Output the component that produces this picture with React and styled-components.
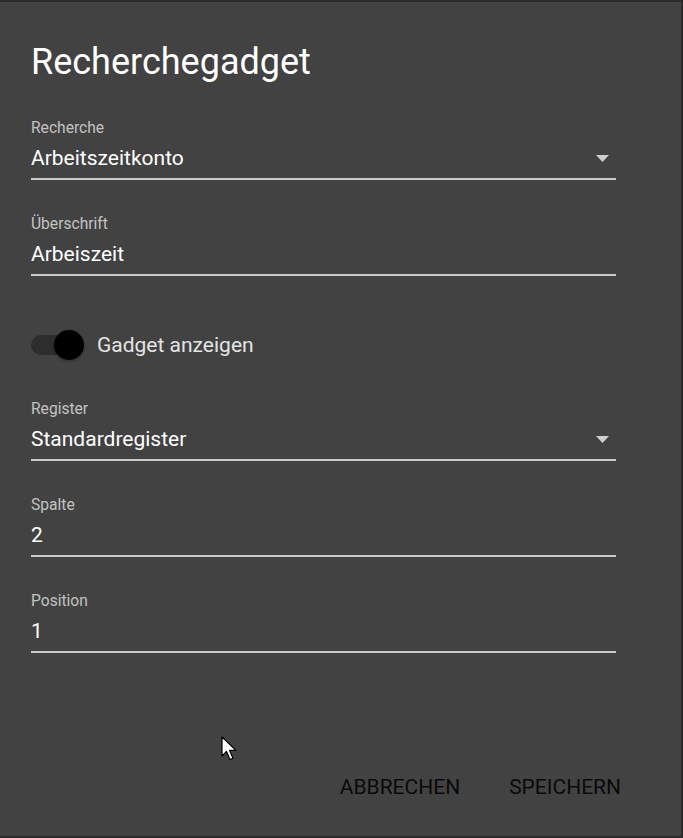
import React from 'react';
import styled, { createGlobalStyle } from 'styled-components';

const GlobalStyle = createGlobalStyle`
  html, body {
    margin: 0;
    padding: 0;
    background: #2b2b2b;
  }
  body {
    font-family: Roboto, "Liberation Sans", Arial, sans-serif;
  }
`

const Backdrop = styled.div`
  position: relative;
  height: 838px;
  padding: 2px 2px 2px 0;
  box-sizing: border-box;
`

const Dialog = styled.div`
  height: 834px;
  background: #424242;
  display: flex;
  flex-direction: column;
  box-sizing: border-box;
  padding: 38px 0 25px;
`

const Title = styled.h2`
  margin: 0 0 0 31px;
  font-size: 36px;
  line-height: 44px;
  font-weight: 400;
  color: #fff;
`

const Form = styled.div`
  display: flex;
  flex-direction: column;
  gap: 35px;
  margin-top: 35px;
  padding: 0 65px 0 31px;
`

const Field = styled.div`
  display: flex;
  flex-direction: column;
`

const Label = styled.span`
  font-size: 15.6px;
  line-height: 18px;
  color: #c2c2c2;
`

const Value = styled.div`
  margin-top: 9px;
  display: flex;
  align-items: center;
  justify-content: space-between;
  font-size: 21px;
  line-height: 24px;
  color: #fff;
  padding: 0 7px 8px 0;
  border-bottom: 2px solid #cacaca;
`

const Arrow = styled.svg`
  width: 13px;
  height: 7px;
  display: block;
`

const ToggleRow = styled.label`
  display: flex;
  align-items: center;
  gap: 14px;
  height: 40px;
  padding-top: 14px;
`

const Track = styled.span`
  position: relative;
  display: block;
  width: 52px;
  height: 40px;
  &::before {
    content: '';
    position: absolute;
    left: 0;
    top: 10px;
    width: 50px;
    height: 20px;
    border-radius: 10px;
    background: #2d2d2d;
  }
`

const Thumb = styled.span`
  position: absolute;
  left: 23px;
  top: 5px;
  width: 30px;
  height: 30px;
  border-radius: 50%;
  background: #000;
  box-shadow: 0 1px 3px rgba(0, 0, 0, 0.4);
`

const ToggleText = styled.span`
  font-size: 21px;
  line-height: 24px;
  color: #e4e4e4;
`

const Actions = styled.div`
  margin-top: auto;
  display: flex;
  justify-content: flex-end;
  gap: 17px;
  padding-right: 44px;
`

const Button = styled.button`
  border: 0;
  background: none;
  font-family: Roboto, "Liberation Sans", Arial, sans-serif;
  font-size: 21px;
  line-height: 24px;
  padding: 12px 16px;
  text-transform: uppercase;
  color: #0a0a0a;
  cursor: pointer;
`

const Cursor = styled.svg`
  position: absolute;
  left: 221px;
  top: 736px;
  width: 18px;
  height: 26px;
`

const SelectField = ({ label, value }) => (
  <Field>
    <Label>{label}</Label>
    <Value>
      {value}
      <Arrow viewBox="0 0 13 7">
        <path d="M0 0 L13 0 L6.5 7 Z" fill="#cfcfcf" />
      </Arrow>
    </Value>
  </Field>
)

const TextField = ({ label, value }) => (
  <Field>
    <Label>{label}</Label>
    <Value>{value}</Value>
  </Field>
)

const App = () => {
  return (
    <Backdrop>
      <GlobalStyle />
      <Dialog>
        <Title>Recherchegadget</Title>
        <Form>
          <SelectField label="Recherche" value="Arbeitszeitkonto" />
          <TextField label="Überschrift" value="Arbeiszeit" />
          <ToggleRow>
            <Track>
              <Thumb />
            </Track>
            <ToggleText>Gadget anzeigen</ToggleText>
          </ToggleRow>
          <SelectField label="Register" value="Standardregister" />
          <TextField label="Spalte" value="2" />
          <TextField label="Position" value="1" />
        </Form>
        <Actions>
          <Button>Abbrechen</Button>
          <Button>Speichern</Button>
        </Actions>
      </Dialog>
      <Cursor viewBox="0 0 18 26">
        <path d="M1 1 L1 20 L5.5 15.5 L9 23.5 L12 22.2 L8.6 14.4 L15 14.4 Z" fill="#fff" stroke="#000" strokeWidth="1.2" strokeLinejoin="round" />
      </Cursor>
    </Backdrop>
  )
}

export default App;
